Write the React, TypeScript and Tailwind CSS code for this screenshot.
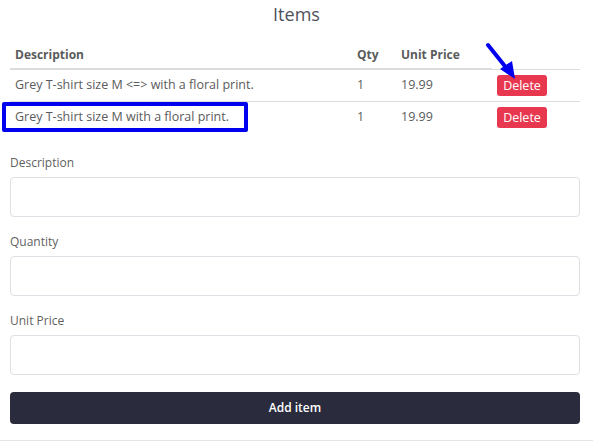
import React from "react";

const font = { fontFamily: '"Open Sans", "Liberation Sans", sans-serif' };

export default function App() {
  const rows = [
    "Grey T-shirt size M <=> with a floral print.",
    "Grey T-shirt size M with a floral print.",
  ];
  return (
    <div className="relative w-[593px] h-[443px] bg-white text-[#5b5b5b]" style={font}>
      <h2 className="text-center text-[18px] leading-[28px] text-[#4d525b]">Items</h2>
      <div className="pl-[10px] pr-[13px] mt-[12px]">
        <table className="w-full border-collapse text-[12.5px]">
          <thead>
            <tr className="text-left text-[12px]">
              <th className="font-bold pl-[5px] pb-[4px] h-[29px] align-bottom border-b-2 border-[#dcdcdc] w-[342px]">Description</th>
              <th className="font-bold pl-[5px] pb-[4px] align-bottom border-b-2 border-[#dcdcdc] w-[44px]">Qty</th>
              <th className="font-bold pl-[5px] pb-[4px] align-bottom border-b-2 border-[#dcdcdc] w-[96px]">Unit Price</th>
              <th className="border-b border-[#dcdcdc]"></th>
            </tr>
          </thead>
          <tbody>
            {rows.map((r, i) => (
              <tr key={i} className={i === 0 ? "border-b border-[#dcdcdc]" : ""}>
                <td className="pl-[5px] h-[32px] align-middle">{r}</td>
                <td className="pl-[5px] align-middle">1</td>
                <td className="pl-[5px] align-middle">19.99</td>
                <td className="pl-[5px] align-middle">
                  <button className="bg-[#e8384f] text-white text-[12.5px] rounded-[3px] h-[21px] w-[50px] leading-[21px]">Delete</button>
                </td>
              </tr>
            ))}
          </tbody>
        </table>
      </div>
      <form className="pl-[10px] pr-[13px] mt-[22px] flex flex-col">
        {["Description", "Quantity", "Unit Price"].map((l, i) => (
          <div key={l} className={i > 0 ? "mt-[17px]" : ""}>
            <label className="block text-[12px] leading-[16px] text-[#5f5f5f] mb-[6px]">{l}</label>
            <input className="block w-full h-[40px] border border-[#dde0e4] rounded-[4px]" />
          </div>
        ))}
        <button type="button" className="mt-[17px] h-[32px] w-full bg-[#2a2b3d] text-white text-[12px] font-semibold rounded-[4px]">Add item</button>
      </form>
      <div className="absolute left-0 right-0 top-[440px] border-t border-[#e5e5e5]" />
      <div className="absolute left-[2px] top-[102px] w-[246px] h-[30px] border-[4px] border-[#0000ee] rounded-[2px]" />
      <svg className="absolute left-[482px] top-[40px]" width="40" height="42" viewBox="0 0 40 42">
        <line x1="6" y1="5" x2="26" y2="30" stroke="#0000ee" strokeWidth="4" strokeLinecap="round" />
        <polygon points="33,39 18,29 30,21" fill="#0000ee" />
      </svg>
    </div>
  );
}
